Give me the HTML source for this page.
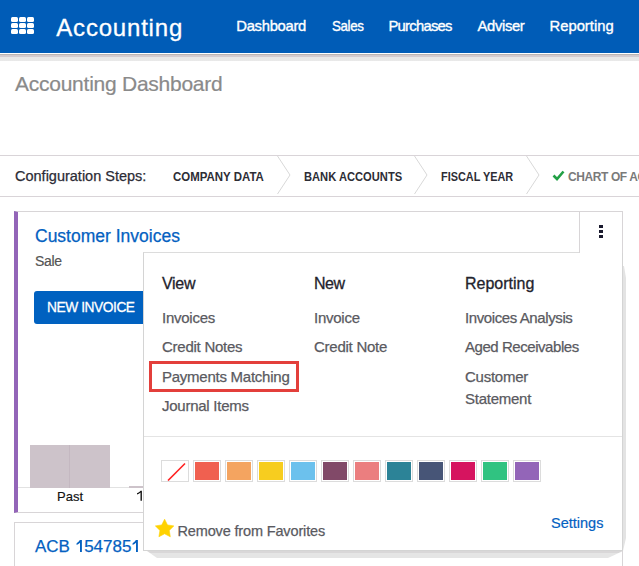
<!DOCTYPE html>
<html><head><meta charset="utf-8">
<style>
*{margin:0;padding:0;box-sizing:border-box}
html,body{width:639px;height:566px;overflow:hidden;background:#fff;font-family:"Liberation Sans",sans-serif}
.a{position:absolute;white-space:nowrap;line-height:1}
#nav{position:absolute;left:0;top:0;width:639px;height:53px;background:#005cb7}
#navline{position:absolute;left:0;top:53px;width:639px;height:1px;background:#fff}
#navshadow{position:absolute;left:0;top:54px;width:639px;height:7px;background:linear-gradient(#bab5b3 0,#bab5b3 1px,#d3cbcf 1px,#d3cbcf 3px,#e7e7e7 3px,#e9e9e9 7px)}
.navi{color:#fff;font-size:14.8px;-webkit-text-stroke:0.35px #fff}
.grid{position:absolute;left:11px;top:17px;width:23px;height:17px}
.grid i{position:absolute;width:7px;height:5px;background:#fff;border-radius:1.5px}
.hl{position:absolute;left:0;width:639px;height:1px;background:#d9d4d8}
.step{font-size:12px;font-weight:bold;color:#2d2d35;letter-spacing:-0.4px}
.chev{position:absolute;top:156px;width:14px;height:38px}
.card{position:absolute;border:1px solid #d8d5d7;background:#fff}
.mi{font-size:15px;color:#5a5a5f;-webkit-text-stroke:0.25px #5a5a5f;letter-spacing:-0.25px}
.mh{font-size:16px;color:#23232d;-webkit-text-stroke:0.3px #23232d}
.sw{position:absolute;top:460px;width:28px;height:22px;border:1px solid #dcdcdc;background:#fff}
.sw i{position:absolute;left:1px;top:1px;right:1px;bottom:1px}
</style></head><body>
<div id="nav"></div>
<div id="navline"></div>
<div id="navshadow"></div>
<div class="grid">
<i style="left:0;top:0"></i><i style="left:8px;top:0"></i><i style="left:16px;top:0"></i>
<i style="left:0;top:6px"></i><i style="left:8px;top:6px"></i><i style="left:16px;top:6px"></i>
<i style="left:0;top:12px"></i><i style="left:8px;top:12px"></i><i style="left:16px;top:12px"></i>
</div>
<div class="a" style="left:56.3px;top:16.3px;font-size:24px;color:#fff;letter-spacing:0.8px;-webkit-text-stroke:0.3px #fff">Accounting</div>
<div class="a navi" style="left:236.3px;top:19px;letter-spacing:-0.3px">Dashboard</div>
<div class="a navi" style="left:331.5px;top:19px;letter-spacing:-0.4px;transform:scaleX(0.9);transform-origin:0 0">Sales</div>
<div class="a navi" style="left:388.5px;top:19px;letter-spacing:-0.75px">Purchases</div>
<div class="a navi" style="left:477.5px;top:19px;letter-spacing:-0.35px">Adviser</div>
<div class="a navi" style="left:549.5px;top:19px;letter-spacing:0px">Reporting</div>

<div class="a" style="left:15px;top:73px;font-size:21px;letter-spacing:-0.25px;color:#8a8a8a;-webkit-text-stroke:0.2px #8a8a8a">Accounting Dashboard</div>

<div class="hl" style="top:155px"></div>
<div class="hl" style="top:196px"></div>
<div class="a" style="left:15px;top:169px;font-size:14.5px;color:#2c2c36;-webkit-text-stroke:0.25px #2c2c36">Configuration Steps:</div>
<div class="a step" style="left:173px;top:170.5px;letter-spacing:0;transform:scaleX(0.955);transform-origin:0 0">COMPANY DATA</div>
<svg class="chev" style="left:277px" viewBox="0 0 14 38"><path d="M0.5 0 L13 19 L0.5 38" fill="none" stroke="#d8d8d8" stroke-width="1"/></svg>
<div class="a step" style="left:304px;top:170.5px;letter-spacing:0;transform:scaleX(0.93);transform-origin:0 0">BANK ACCOUNTS</div>
<svg class="chev" style="left:414px" viewBox="0 0 14 38"><path d="M0.5 0 L13 19 L0.5 38" fill="none" stroke="#d8d8d8" stroke-width="1"/></svg>
<div class="a step" style="left:441px;top:170.5px;letter-spacing:0;transform:scaleX(0.907);transform-origin:0 0">FISCAL YEAR</div>
<svg class="chev" style="left:526px" viewBox="0 0 14 38"><path d="M0.5 0 L13 19 L0.5 38" fill="none" stroke="#d8d8d8" stroke-width="1"/></svg>
<svg style="position:absolute;left:552px;top:170.2px;width:13px;height:11px" viewBox="0 0 13 11"><path d="M1.5 5.5 L5 9 L11.5 1.5" fill="none" stroke="#22a045" stroke-width="2.6"/></svg>
<div class="a step" style="left:568px;top:170.5px;color:#7a7a7a">CHART OF ACCOUNTS</div>

<!-- card 1 -->
<div class="card" style="left:14px;top:211px;width:609px;height:302px;border-left:4px solid #9365b8"></div>


<div class="a" style="left:35px;top:228px;font-size:17.5px;color:#0461c1;-webkit-text-stroke:0.25px #0461c1">Customer Invoices</div>
<div class="a" style="left:35px;top:254px;font-size:14px;color:#555;-webkit-text-stroke:0.2px #555;letter-spacing:-0.3px">Sale</div>
<div style="position:absolute;left:34px;top:291px;width:130px;height:33px;background:#0061c0;border-radius:3px"></div>
<div class="a" style="left:47px;top:299.4px;font-size:15.3px;color:#fff;letter-spacing:-0.5px;-webkit-text-stroke:0.3px #fff;transform:scaleX(0.9);transform-origin:0 0">NEW INVOICE</div>

<!-- chart -->
<div style="position:absolute;left:18px;top:487px;width:125px;height:1px;background:#e2e2e2"></div>
<div style="position:absolute;left:30px;top:445px;width:80px;height:43px;background:#cdc3ca"></div>
<div style="position:absolute;left:69px;top:445px;width:1px;height:43px;background:#c4b8c1"></div>
<div style="position:absolute;left:129px;top:486px;width:14px;height:2px;background:#cdc3ca"></div>
<div class="a" style="left:57px;top:490px;font-size:13px;color:#111;-webkit-text-stroke:0.15px #111">Past</div>
<svg style="position:absolute;left:136px;top:490px;width:7px;height:12px" viewBox="0 0 7 12"><path d="M4.6 0.7 L5.9 0.7 L5.9 10.8 L4.5 10.8 L4.5 2.6 Q3 3.9 1 4.6 L1 3.3 Q3.3 2.3 4.6 0.7 Z" fill="#111"/></svg>

<!-- card 2 -->
<div class="card" style="left:14px;top:522px;width:609px;height:60px"></div>
<div class="a" style="left:35px;top:538px;font-size:17px;color:#0461c1;letter-spacing:0px;-webkit-text-stroke:0.25px #0461c1">ACB <span style="display:inline-block;width:9.45px;height:11.9px;position:relative"><svg style="position:absolute;left:0;top:0" width="9" height="12" viewBox="0 0 9 12"><path d="M4.9 0.1 L6.9 0.1 L6.9 11.9 L5 11.9 L5 2.8 Q3.6 4.1 1.6 4.9 L1.6 3.2 Q3.8 2.1 4.9 0.1 Z" fill="#0461c1"/></svg></span>54785<span style="display:inline-block;width:9.45px;height:11.9px;position:relative"><svg style="position:absolute;left:0;top:0" width="9" height="12" viewBox="0 0 9 12"><path d="M4.9 0.1 L6.9 0.1 L6.9 11.9 L5 11.9 L5 2.8 Q3.6 4.1 1.6 4.9 L1.6 3.2 Q3.8 2.1 4.9 0.1 Z" fill="#0461c1"/></svg></span></div>

<!-- dropdown menu -->
<div style="position:absolute;left:623px;top:266px;width:3px;height:285px;background:#e3e3e3;clip-path:polygon(0 0,1px 0,100% 12px,100% calc(100% - 13px),0 100%)"></div>
<div style="position:absolute;left:147px;top:551px;width:476px;height:7px;background:linear-gradient(#d9d7d8 0 2px,#e5e5e5 2px);clip-path:polygon(0 0,100% 0,calc(100% - 15px) 100%,10px 100%)"></div>
<div style="position:absolute;left:143px;top:252px;width:480px;height:299px;background:#fff;border:1px solid #d4d4d4;border-top:1px solid #dcdcdc"></div>
<div style="position:absolute;left:579px;top:211px;width:44px;height:42px;border:1px solid #d8d5d7;border-bottom:0;background:#fff"></div><div style="position:absolute;left:580px;top:252px;width:42px;height:1px;background:#fff"></div>
<div style="position:absolute;left:599px;top:225px;width:4px;height:13px">
<i style="position:absolute;left:0;top:0;width:4px;height:3px;background:#1a1a2e"></i>
<i style="position:absolute;left:0;top:5px;width:4px;height:3px;background:#1a1a2e"></i>
<i style="position:absolute;left:0;top:10px;width:4px;height:3px;background:#1a1a2e"></i>
</div>
<div class="a mh" style="left:162px;top:276.1px;letter-spacing:-0.3px">View</div>
<div class="a mh" style="left:314px;top:276.1px;letter-spacing:-0.45px">New</div>
<div class="a mh" style="left:465px;top:276.1px;letter-spacing:0px">Reporting</div>

<div class="a mi" style="left:162px;top:309.58px">Invoices</div>
<div class="a mi" style="left:162px;top:339.08px">Credit Notes</div>
<div class="a mi" style="left:162px;top:369.08px">Payments Matching</div>
<div class="a mi" style="left:162px;top:397.58px">Journal Items</div>

<div class="a mi" style="left:314px;top:309.58px">Invoice</div>
<div class="a mi" style="left:314px;top:339.08px">Credit Note</div>

<div class="a mi" style="left:465px;top:309.58px;letter-spacing:-0.4px">Invoices Analysis</div>
<div class="a mi" style="left:465px;top:339.08px;letter-spacing:-0.45px">Aged Receivables</div>
<div class="a mi" style="left:465px;top:369.08px">Customer</div>
<div class="a mi" style="left:465px;top:390.88px">Statement</div>

<div style="position:absolute;left:149px;top:361px;width:150px;height:31px;border:3px solid #e33f3b"></div>

<div style="position:absolute;left:144px;top:436px;width:478px;height:1px;background:#e4e4e4"></div>

<div class="sw" style="left:161px"><svg style="position:absolute;left:0;top:0" width="26" height="20"><path d="M6 19.5 L23 2.5" stroke="#ff2020" stroke-width="1.6"/></svg></div>
<div class="sw" style="left:193px"><i style="background:#f06050"></i></div>
<div class="sw" style="left:225px"><i style="background:#f4a460"></i></div>
<div class="sw" style="left:257px"><i style="background:#f7cd1f"></i></div>
<div class="sw" style="left:289px"><i style="background:#6cc1ed"></i></div>
<div class="sw" style="left:321px"><i style="background:#814968"></i></div>
<div class="sw" style="left:353px"><i style="background:#eb7e7f"></i></div>
<div class="sw" style="left:385px"><i style="background:#2c8397"></i></div>
<div class="sw" style="left:417px"><i style="background:#475577"></i></div>
<div class="sw" style="left:449px"><i style="background:#d6145f"></i></div>
<div class="sw" style="left:481px"><i style="background:#30c381"></i></div>
<div class="sw" style="left:513px"><i style="background:#9365b8"></i></div>

<svg style="position:absolute;left:155px;top:519px;width:20px;height:19px" viewBox="0 0 20 19"><path d="M9.60 0.20 L12.48 5.94 L18.83 6.90 L14.26 11.41 L15.30 17.75 L9.60 14.80 L3.90 17.75 L4.94 11.41 L0.37 6.90 L6.72 5.94 Z" fill="#ffd200" stroke="#ffd200" stroke-width="0.6" stroke-linejoin="round"/></svg>
<div class="a mi" style="left:177.5px;top:523.6px;font-size:14.5px;letter-spacing:-0.15px">Remove from Favorites</div>
<div class="a" style="left:551px;top:515.5px;font-size:14.5px;color:#0461c1;-webkit-text-stroke:0.2px #0461c1">Settings</div>
</body></html>
